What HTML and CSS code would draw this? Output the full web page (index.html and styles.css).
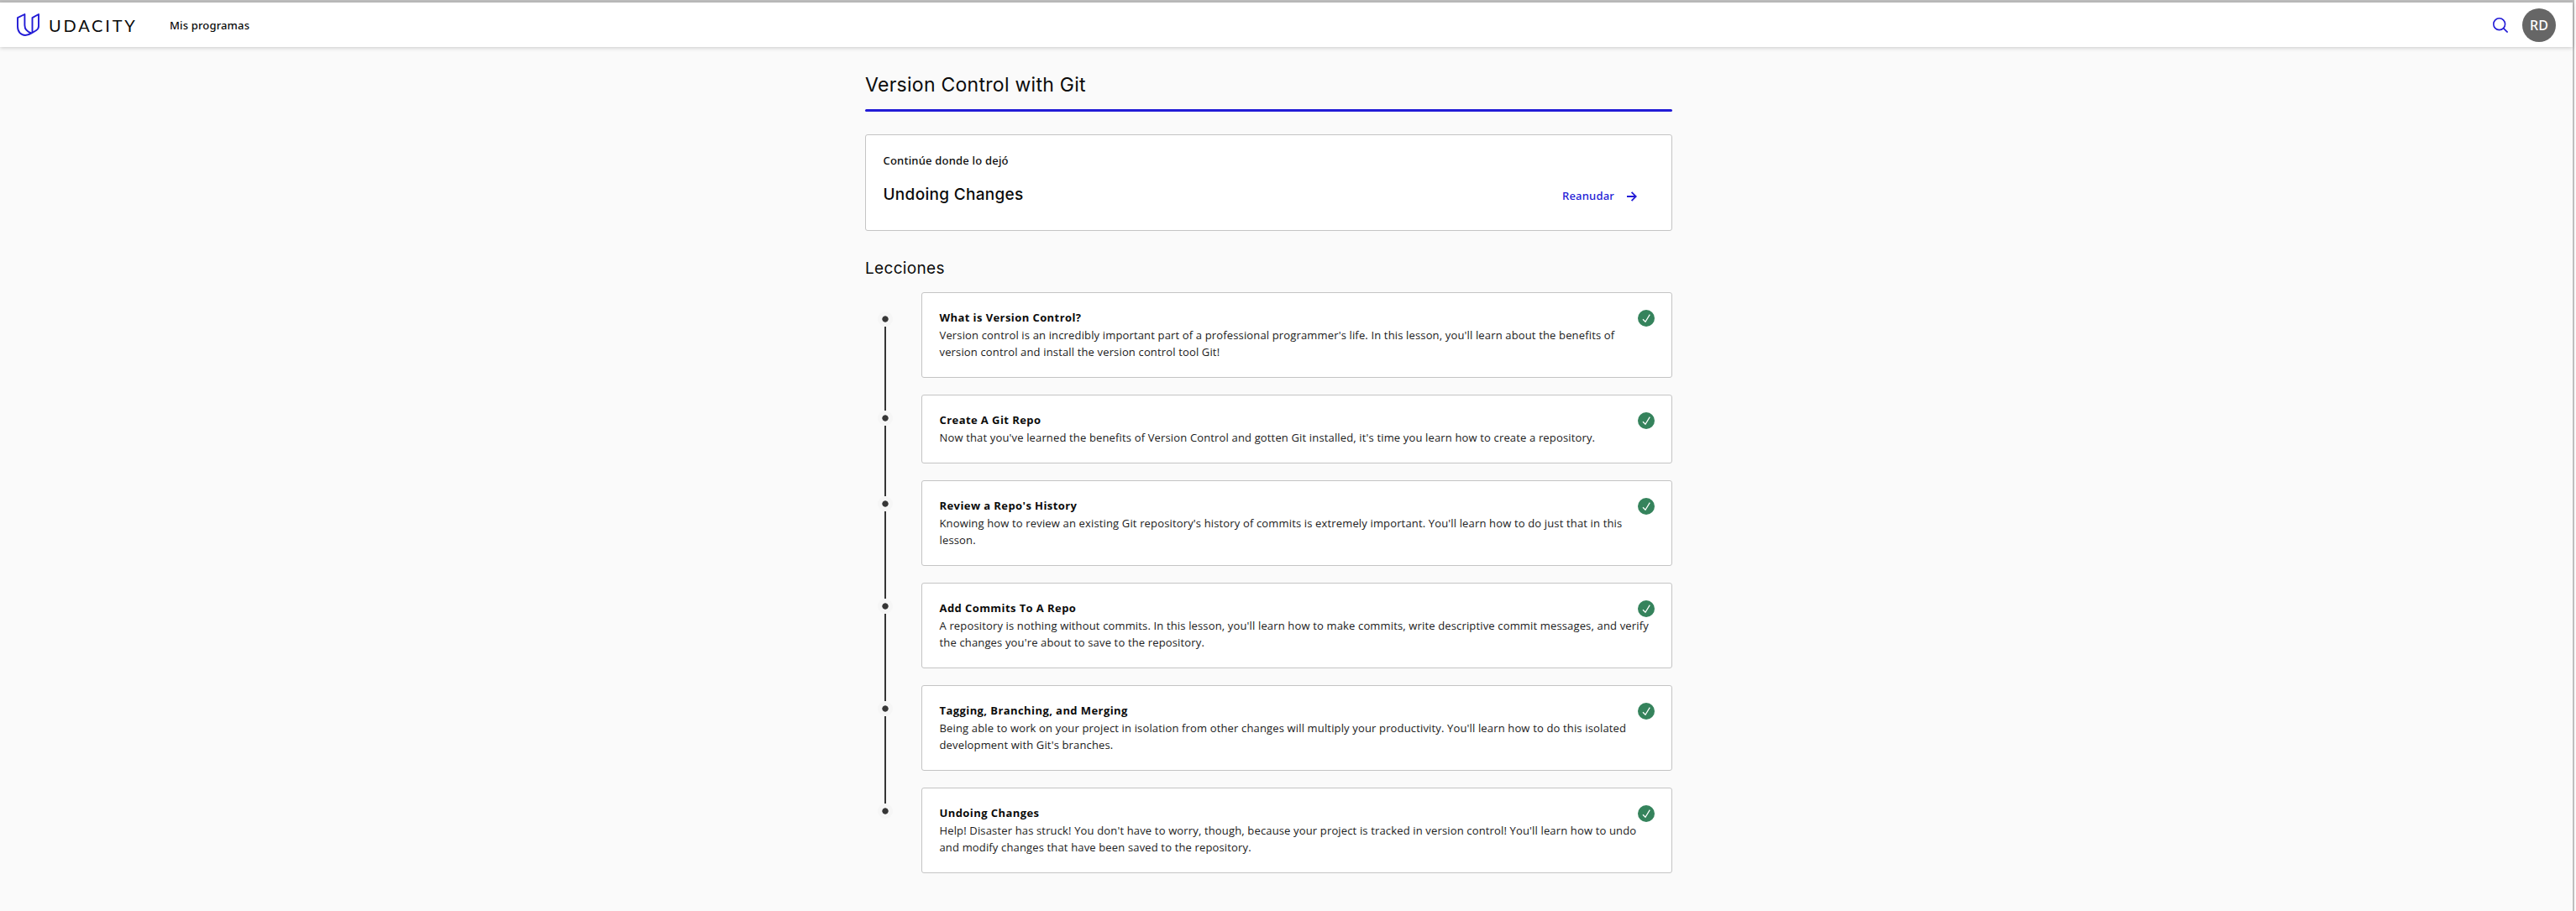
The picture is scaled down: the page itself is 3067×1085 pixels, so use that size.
FILE: index.html
```
<!DOCTYPE html>
<html lang="es">
<head>
<meta charset="utf-8">
<title>Version Control with Git - Udacity</title>
<link rel="stylesheet" href="styles.css">
</head>
<body>
<svg class="sprite" aria-hidden="true">
  <symbol id="check" viewBox="0 0 20 20">
    <circle cx="10" cy="10" r="10" fill="#35835c"/>
    <path d="M6 11.2 9 14.3 14.3 5.6" fill="none" stroke="#fff" stroke-width="1.25"/>
  </symbol>
</svg>
<div class="window">
  <header class="topbar">
    <a class="brand">
      <svg class="logo" viewBox="0 0 27 27" fill="none" stroke="#221bd6" stroke-width="1.9" stroke-linejoin="round" stroke-linecap="round">
        <path d="M9.400 1 1 5.200v10.300C1 22 4.800 26 10 26c3 0 5.200-1 7.600-2.600-5-1.500-8.200-4.500-8.200-9.500z"/>
        <path d="M26 1 18.500 5.200v17.800L23 20.200c2-1.300 3-2.800 3-5z"/>
      </svg>
      <span class="wordmark">UDACITY</span>
    </a>
    <nav class="nav">Mis programas</nav>
    <svg class="search" viewBox="0 0 18 18" fill="none" stroke="#221bd6" stroke-width="1.600"><circle cx="7.700" cy="7.700" r="6.900"/><path d="m12.600 12.600 5 5"/></svg>
    <div class="avatar">RD</div>
  </header>
  <main class="page">
    <h1 class="title">Version Control with Git</h1>
    <div class="rule"></div>
    <section class="card resume">
      <div>
        <p class="resume-label">Continúe donde lo dejó</p>
        <h2 class="heading">Undoing Changes</h2>
      </div>
      <a class="resume-link">Reanudar
        <svg class="arrow" viewBox="0 0 12 12" fill="none" stroke="#221bd6" stroke-width="1.800"><path d="M0 6h10.500M5.600.8 10.800 6l-5.200 5.200"/></svg>
      </a>
    </section>
    <h2 class="heading section-heading">Lecciones</h2>
    <ol class="lessons">
      <li class="lesson">
        <div class="rail"><span class="dot"></span><span class="line"></span></div>
        <article class="card lesson-card"><h3>What is Version Control?</h3><p>Version control is an incredibly important part of a professional programmer's life. In this lesson, you'll learn about the benefits of<br>version control and install the version control tool Git!</p><svg class="check"><use href="#check"/></svg></article>
      </li>
      <li class="lesson">
        <div class="rail"><span class="dot"></span><span class="line"></span></div>
        <article class="card lesson-card"><h3>Create A Git Repo</h3><p>Now that you've learned the benefits of Version Control and gotten Git installed, it's time you learn how to create a repository.</p><svg class="check"><use href="#check"/></svg></article>
      </li>
      <li class="lesson">
        <div class="rail"><span class="dot"></span><span class="line"></span></div>
        <article class="card lesson-card"><h3>Review a Repo's History</h3><p>Knowing how to review an existing Git repository's history of commits is extremely important. You'll learn how to do just that in this<br>lesson.</p><svg class="check"><use href="#check"/></svg></article>
      </li>
      <li class="lesson">
        <div class="rail"><span class="dot"></span><span class="line"></span></div>
        <article class="card lesson-card"><h3>Add Commits To A Repo</h3><p>A repository is nothing without commits. In this lesson, you'll learn how to make commits, write descriptive commit messages, and verify<br>the changes you're about to save to the repository.</p><svg class="check"><use href="#check"/></svg></article>
      </li>
      <li class="lesson">
        <div class="rail"><span class="dot"></span><span class="line"></span></div>
        <article class="card lesson-card"><h3>Tagging, Branching, and Merging</h3><p>Being able to work on your project in isolation from other changes will multiply your productivity. You'll learn how to do this isolated<br>development with Git's branches.</p><svg class="check"><use href="#check"/></svg></article>
      </li>
      <li class="lesson">
        <div class="rail"><span class="dot"></span></div>
        <article class="card lesson-card"><h3>Undoing Changes</h3><p>Help! Disaster has struck! You don't have to worry, though, because your project is tracked in version control! You'll learn how to undo<br>and modify changes that have been saved to the repository.</p><svg class="check"><use href="#check"/></svg></article>
      </li>
    </ol>
  </main>
</div>
</body>
</html>
```
FILE: styles.css
```
* { box-sizing: border-box; }
body, h1, h2, h3, p, ol { margin: 0; padding: 0; }
body {
  background: #fafafa;
  color: #0b0b0b;
  font: 13px/20px "Open Sans", "Noto Sans", sans-serif;
}
.sprite { display: none; }
.window {
  width: calc(100% - 2px);
  height: 1085px;
  border-top: 3px solid #bfbfbf;
  border-right: 2px solid #bfbfbf;
}
.topbar {
  display: flex;
  align-items: center;
  height: 53px;
  padding: 0 20px;
  background: #fff;
  box-shadow: 0 1px 5px rgba(0, 0, 0, .2);
}
.brand { display: flex; align-items: center; gap: 11px; width: 182px; }
.logo { width: 27px; height: 27px; }
.wordmark { font: 20px/24px Lato, sans-serif; letter-spacing: 2.8px; }
.nav { font-family: "Noto Sans", sans-serif; font-weight: 500; letter-spacing: .15px; }
.search { width: 18px; height: 18px; margin-left: auto; margin-right: 17px; }
.avatar {
  width: 40px;
  height: 40px;
  border-radius: 50%;
  background: #666;
  color: #fff;
  font: 500 16px/40px "Noto Sans", sans-serif;
  text-align: center;
}
.page { width: 961px; margin-left: 1030px; padding-top: 30px; }
.title { font: 400 23px/30px Inter, sans-serif; letter-spacing: .27px; }
.rule { height: 3px; margin: 14px 0 27px; border-radius: 2px; background: #221bd6; }
.card { border: 1px solid #c4c4c4; border-radius: 3px; background: #fff; }
.resume {
  display: flex;
  justify-content: space-between;
  height: 115px;
  padding: 20px 41px 0 20.5px;
}
.resume-label { font-family: "Noto Sans", sans-serif; font-weight: 500; letter-spacing: .2px; }
.heading { font: 500 19px/24px Inter, sans-serif; letter-spacing: .3px; }
.resume .heading { margin-top: 19px; }
.section-heading { margin: 33px 0 16px; letter-spacing: .32px; font-weight: 400; }
.resume-link {
  display: flex;
  align-items: center;
  gap: 15px;
  height: 20px;
  margin-top: 42px;
  color: #221bd6;
  font-family: "Noto Sans", sans-serif;
  font-weight: 500;
  letter-spacing: .2px;
}
.arrow { width: 12px; height: 12px; margin-top: 2px; }
.lessons { list-style: none; }
.lesson { display: grid; grid-template-columns: 67px 894px; }
.rail { display: flex; flex-direction: column; padding: 19px 0 0 14.5px; }
.lesson:first-child .rail { padding-top: 23px; }
.dot {
  width: 18px;
  height: 18px;
  border-radius: 50%;
  background: radial-gradient(circle, #363636 3.3px, #f6f6f6 4px);
}
.line { flex: 1; width: 2px; margin: 0 0 -19px 8.500px; background: #363636; }
.lesson-card {
  display: grid;
  grid-template-columns: 1fr 20px;
  margin-bottom: 20px;
  padding: 19px 20px 20px 20.5px;
}
.lesson-card h3 { margin-bottom: 1px; font-size: 13px; line-height: 20px; font-weight: 700; letter-spacing: .42px; }
.lesson-card p { grid-area: 2 / 1 / 3 / 3; color: #202020; letter-spacing: .15px; white-space: nowrap; }
.check { grid-area: 1 / 2; width: 20px; height: 20px; margin-top: 1px; }
```
